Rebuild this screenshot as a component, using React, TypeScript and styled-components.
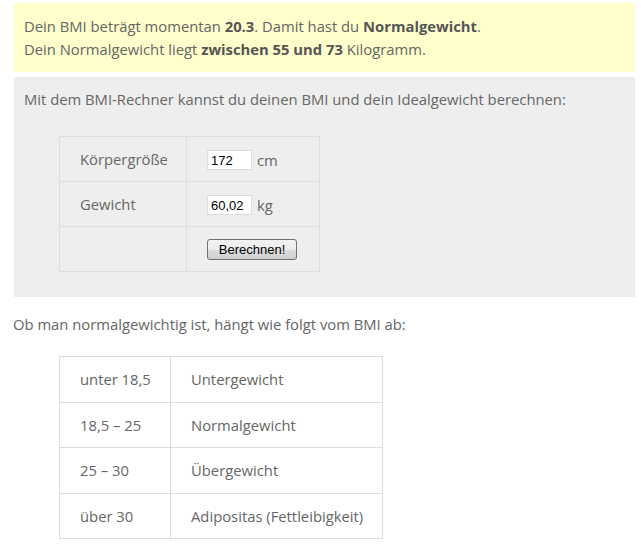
import React from "react";
import styled, { createGlobalStyle } from "styled-components";

const GlobalStyle = createGlobalStyle`
    body {
        margin: 0;
        background: #fff;
        font-family: "Open Sans", "DejaVu Sans", sans-serif;
        font-size: 14.8px;
        color: #666;
    }
`;

const PageCSS = styled.div`
    padding: 3px 6px 0 14px;
    width: 621px;
`;

const NoticeCSS = styled.div`
    background: #ffffcc;
    padding: 12px 10px 11px;
    line-height: 23px;
    b {
        font-weight: 700;
        color: #555;
    }
`;

const CalcBoxCSS = styled.div`
    margin-top: 5px;
    background: #eeeeee;
    padding: 11px 10px 25px;
    line-height: 23px;
`;

const TableCSS = styled.table<{ $first: number; $second: number }>`
    border-collapse: collapse;
    td {
        border: 1px solid #dddddd;
        height: 44px;
        padding: 0 0 0 20px;
        vertical-align: middle;
        line-height: 20px;
    }
    td:first-child {
        width: ${(p) => p.$first}px;
    }
    td:last-child {
        width: ${(p) => p.$second}px;
    }
`;

const CalcTableCSS = styled(TableCSS)`
    margin: 25px 0 0 35px;
`;

const InputCSS = styled.input`
    width: 45px;
    height: 20px;
    box-sizing: border-box;
    border: 1px solid #dcdcdc;
    background: #fff;
    font-family: "Liberation Sans", Arial, sans-serif;
    font-size: 13px;
    color: #000;
    padding: 0 3px;
    margin-right: 5px;
    vertical-align: middle;
`;

const UnitCSS = styled.span`
    vertical-align: middle;
`;

const ButtonCSS = styled.button`
    width: 90px;
    height: 21px;
    font-family: "Liberation Sans", Arial, sans-serif;
    font-size: 13px;
    color: #000;
    border: 1px solid #707070;
    border-radius: 3px;
    background: linear-gradient(#f2f2f2, #ebebeb 50%, #dddddd 51%, #cfcfcf);
    padding: 0;
    vertical-align: middle;
`;

const IntroCSS = styled.p`
    margin: 16px 0 0 -1px;
    line-height: 23px;
`;

const RangeTableCSS = styled(TableCSS)`
    margin: 20px 0 0 45px;
    td {
        height: 44.5px;
    }
`;

const ranges = [
    ["unter 18,5", "Untergewicht"],
    ["18,5 – 25", "Normalgewicht"],
    ["25 – 30", "Übergewicht"],
    ["über 30", "Adipositas (Fettleibigkeit)"],
];

function App() {
    const [height, setHeight] = React.useState("172");
    const [weight, setWeight] = React.useState("60,02");

    return (
        <PageCSS>
            <GlobalStyle />
            <NoticeCSS>
                Dein BMI beträgt momentan <b>20.3</b>. Damit hast du <b>Normalgewicht</b>.
                <br />
                Dein Normalgewicht liegt <b>zwischen 55 und 73</b> Kilogramm.
            </NoticeCSS>

            <CalcBoxCSS>
                Mit dem BMI-Rechner kannst du deinen BMI und dein Idealgewicht berechnen:
                <CalcTableCSS $first={106} $second={112}>
                    <tbody>
                        <tr>
                            <td>Körpergröße</td>
                            <td>
                                <InputCSS value={height} onChange={(e) => setHeight(e.target.value)} />
                                <UnitCSS>cm</UnitCSS>
                            </td>
                        </tr>
                        <tr>
                            <td>Gewicht</td>
                            <td>
                                <InputCSS value={weight} onChange={(e) => setWeight(e.target.value)} />
                                <UnitCSS>kg</UnitCSS>
                            </td>
                        </tr>
                        <tr>
                            <td></td>
                            <td>
                                <ButtonCSS>Berechnen!</ButtonCSS>
                            </td>
                        </tr>
                    </tbody>
                </CalcTableCSS>
            </CalcBoxCSS>

            <IntroCSS>Ob man normalgewichtig ist, hängt wie folgt vom BMI ab:</IntroCSS>
            <RangeTableCSS $first={90} $second={191}>
                <tbody>
                    {ranges.map(([range, label]) => (
                        <tr key={range}>
                            <td>{range}</td>
                            <td>{label}</td>
                        </tr>
                    ))}
                </tbody>
            </RangeTableCSS>
        </PageCSS>
    );
}

export default App;
